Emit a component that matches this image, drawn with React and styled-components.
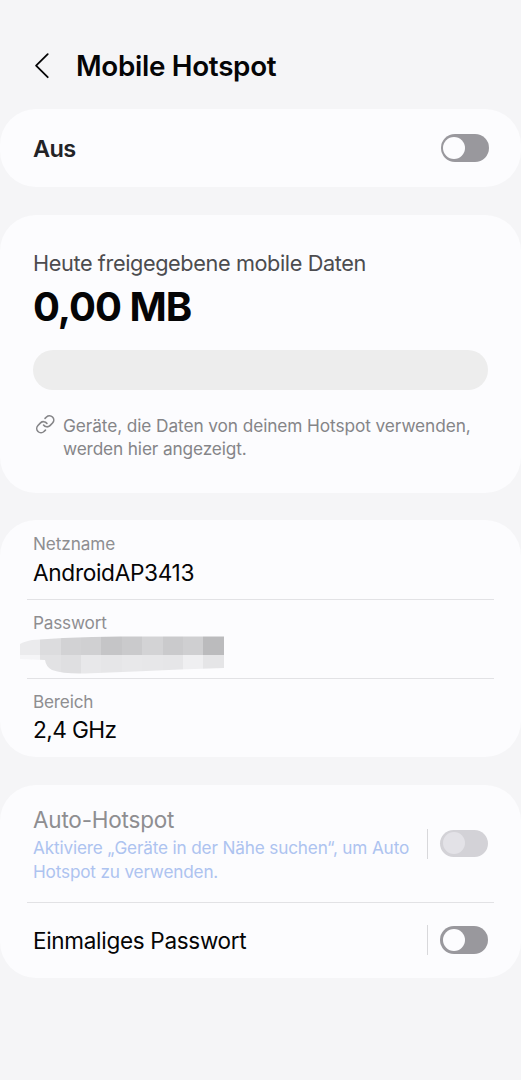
import styled, { createGlobalStyle } from "styled-components";

const GlobalStyle = createGlobalStyle`
  * {
    box-sizing: border-box;
  }
  body {
    margin: 0;
    background: #f5f5f7;
    font-family: Inter, "Liberation Sans", sans-serif;
  }
`;

const Page = styled.main`
  width: 521px;
  height: 1080px;
  overflow: hidden;
  background: #f5f5f7;
`;

const TopBar = styled.header`
  display: flex;
  align-items: center;
  height: 109px;
  padding: 23px 34px 0;
`;

const BackButton = styled.button`
  display: flex;
  width: 42px;
  padding: 0;
  border: 0;
  background: none;
`;

const Title = styled.h1`
  margin: 0;
  color: #050506;
  font-size: 27.8px;
  font-weight: 600;
  line-height: 34px;
  letter-spacing: -0.3px;
  white-space: nowrap;
`;

const Card = styled.section`
  height: ${(p) => p.$height}px;
  margin-bottom: ${(p) => p.$gap || 28}px;
  padding: ${(p) => p.$padding || "0 33px"};
  border-radius: 36px;
  background: #fcfcfe;
`;

const Row = styled.div`
  display: flex;
  align-items: center;
  justify-content: space-between;
  height: ${(p) => p.$height}px;
`;

const Text = styled.div`
  color: ${(p) => p.$color || "#050506"};
  font-size: ${(p) => p.$size}px;
  font-weight: ${(p) => p.$weight || 400};
  line-height: ${(p) => p.$line}px;
  letter-spacing: ${(p) => p.$spacing || 0}px;
  white-space: nowrap;
`;

const RowLabel = styled(Text)`
  padding-top: 2px;
`;

const Switch = styled.span`
  display: block;
  width: 48px;
  height: 27.5px;
  padding: 2.7px;
  border-radius: 14px;
  background: ${(p) => (p.$disabled ? "#d3d2d7" : "#99989d")};
  &::before {
    content: "";
    display: block;
    width: 22px;
    height: 22px;
    border-radius: 50%;
    background: ${(p) => (p.$disabled ? "#e3e2e7" : "#fcfcfe")};
  }
`;

const SwitchGroup = styled.div`
  display: flex;
  align-items: center;
  gap: 12px;
  &::before {
    content: "";
    width: 1px;
    height: 30px;
    background: #d8d8db;
  }
`;

const UsageBar = styled.div`
  height: 40px;
  margin-top: 12px;
  border-radius: 20px;
  background: #ededed;
`;

const Hint = styled.div`
  display: flex;
  gap: 7.5px;
  margin-top: 24px;
  padding-left: 2px;
`;

const Field = styled.div`
  height: 79px;
  padding-top: 13px;
`;

const Divider = styled.hr`
  height: 1px;
  margin: 0 -6px -1px;
  border: 0;
  background: #e2e2e5;
`;

const Redacted = styled.svg`
  display: block;
  margin: 2px 0 0 -13px;
`;

const topBlocks = [
  [0, 20, "#ebebed"],
  [20, 21, "#dcdcde"],
  [41, 20, "#d2d2d4"],
  [61, 20, "#d0d0d2"],
  [81, 21, "#c5c5c7"],
  [102, 20, "#cacacc"],
  [122, 21, "#d3d3d5"],
  [143, 20, "#cacacc"],
  [163, 20, "#cfcfd1"],
  [183, 21, "#bbbbbd"],
];

const bottomBlocks = [
  [0, 20, "#f5f5f7"],
  [20, 21, "#e2e2e4"],
  [41, 20, "#dfdfe1"],
  [61, 20, "#e8e8ea"],
  [81, 21, "#e6e6e8"],
  [102, 20, "#e8e8ea"],
  [122, 21, "#e7e7e9"],
  [143, 20, "#e6e6e8"],
  [163, 20, "#efeff1"],
  [183, 21, "#e5e5e7"],
];

function HiddenPassword() {
  return (
    <Redacted width="204" height="38" viewBox="0 0 204 38">
      <clipPath id="smear">
        <path d="M0 8 Q3 6 12 4 L43 2 Q80 0 115 0.5 L204 0.5 V32 Q160 33 115 35.5 L65 37.5 Q43 38 32 34 Q26 31 25 24 L0 23 Z" />
      </clipPath>
      <g clipPath="url(#smear)" shapeRendering="crispEdges">
        {topBlocks.map(([x, width, fill]) => (
          <rect key={x} x={x} y="0" width={width} height="19" fill={fill} />
        ))}
        {bottomBlocks.map(([x, width, fill]) => (
          <rect key={x} x={x} y="19" width={width} height="19" fill={fill} />
        ))}
      </g>
    </Redacted>
  );
}

function App() {
  return (
    <Page>
      <GlobalStyle />
      <TopBar>
        <BackButton aria-label="Zurück">
          <svg width="16" height="26" viewBox="0 0 16 26" fill="none">
            <path
              d="M13.7 1.2 L2.1 12.6 L13.7 24.2"
              stroke="#050506"
              strokeWidth="1.8"
              strokeLinecap="round"
              strokeLinejoin="round"
            />
          </svg>
        </BackButton>
        <Title>Mobile Hotspot</Title>
      </TopBar>

      <Card $height={78} $padding="0 32.5px 0 33px">
        <Row $height={78}>
          <RowLabel
            $size={23.5}
            $weight={600}
            $line={32}
            $spacing={-0.6}
            $color="#232326"
          >
            Aus
          </RowLabel>
          <Switch />
        </Row>
      </Card>

      <Card $height={277.5} $gap={27.5} $padding="35px 33px 0">
        <Text $size={21.7} $line={26} $spacing={-0.39} $color="#4c4c4f">
          Heute freigegebene mobile Daten
        </Text>
        <Text $size={40} $weight={700} $line={62} $spacing={-1}>
          0,00 MB
        </Text>
        <UsageBar />
        <Hint>
          <svg width="20.5" height="20.5" viewBox="0 0 24 24" fill="none">
            <path
              d="M10 13a5 5 0 0 0 7.54.54l3-3a5 5 0 0 0-7.07-7.07l-1.72 1.71M14 11a5 5 0 0 0-7.54-.54l-3 3a5 5 0 0 0 7.07 7.07l1.71-1.71"
              stroke="#858588"
              strokeWidth="1.9"
              strokeLinecap="round"
            />
          </svg>
          <div>
            <Text $size={17.3} $line={24} $spacing={-0.1} $color="#858588">
              Geräte, die Daten von deinem Hotspot verwenden,
            </Text>
            <Text $size={17.3} $line={22} $spacing={-0.15} $color="#858588">
              werden hier angezeigt.
            </Text>
          </div>
        </Hint>
      </Card>

      <Card $height={237}>
        <Field>
          <Text $size={17.2} $line={22} $spacing={-0.1} $color="#8e8e91">
            Netzname
          </Text>
          <Text $size={22.7} $line={35} $spacing={-0.35}>
            AndroidAP3413
          </Text>
        </Field>
        <Divider />
        <Field>
          <Text $size={17.2} $line={22} $spacing={-0.2} $color="#8e8e91">
            Passwort
          </Text>
          <HiddenPassword />
        </Field>
        <Divider />
        <Field>
          <Text $size={17.2} $line={22} $spacing={-0.2} $color="#8e8e91">
            Bereich
          </Text>
          <Text $size={22.7} $line={34} $spacing={-0.6}>
            2,4 GHz
          </Text>
        </Field>
      </Card>

      <Card $height={192.5}>
        <Row $height={117}>
          <div>
            <Text $size={22.5} $line={32} $spacing={-0.2} $color="#8e8e91">
              Auto-Hotspot
            </Text>
            <Text $size={17.2} $line={24} $spacing={-0.16} $color="#adc3f0">
              Aktiviere „Geräte in der Nähe suchen“, um Auto
            </Text>
            <Text $size={17.2} $line={24} $spacing={-0.18} $color="#adc3f0">
              Hotspot zu verwenden.
            </Text>
          </div>
          <SwitchGroup>
            <Switch $disabled />
          </SwitchGroup>
        </Row>
        <Divider />
        <Row $height={76}>
          <RowLabel $size={22.5} $line={30} $spacing={-0.3}>
            Einmaliges Passwort
          </RowLabel>
          <SwitchGroup>
            <Switch />
          </SwitchGroup>
        </Row>
      </Card>
    </Page>
  );
}

export default App;
